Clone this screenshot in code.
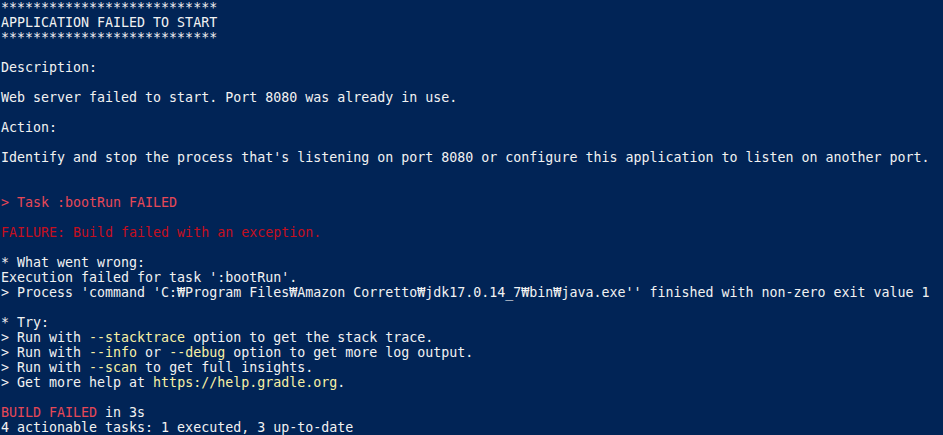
import React from "react"

const W = "text-[#f2f2f2]"
const RED = "text-[#e74856]"
const DRED = "text-[#c50f1f]"
const YEL = "text-[#f9f1a5]"

// each line is a list of [text, colour] pieces
const lines = [
    [["***************************", W]],
    [["APPLICATION FAILED TO START", W]],
    [["***************************", W]],
    [],
    [["Description:", W]],
    [],
    [["Web server failed to start. Port 8080 was already in use.", W]],
    [],
    [["Action:", W]],
    [],
    [["Identify and stop the process that's listening on port 8080 or configure this application to listen on another port.", W]],
    [],
    [],
    [["> Task :bootRun FAILED", RED]],
    [],
    [["FAILURE: Build failed with an exception.", DRED]],
    [],
    [["* What went wrong:", W]],
    [["Execution failed for task ':bootRun'.", W]],
    [["> Process 'command 'C:\u20a9Program Files\u20a9Amazon Corretto\u20a9jdk17.0.14_7\u20a9bin\u20a9java.exe'' finished with non-zero exit value 1", W]],
    [],
    [["* Try:", W]],
    [["> Run with ", W], ["--stacktrace", YEL], [" option to get the stack trace.", W]],
    [["> Run with ", W], ["--info", YEL], [" or ", W], ["--debug", YEL], [" option to get more log output.", W]],
    [["> Run with ", W], ["--scan", YEL], [" to get full insights.", W]],
    [["> Get more help at ", W], ["https://help.gradle.org", YEL], [".", W]],
    [],
    [["BUILD FAILED", RED], [" in 3s", W]],
    [["4 actionable tasks: 1 executed, 3 up-to-date", W]],
]

export default function App() {
    return (
        <div className="w-[943px] h-[435px] overflow-hidden bg-[#012456] pl-[1px] font-['DejaVu_Sans_Mono','Liberation_Mono',monospace] text-[13.3px] leading-[15px]">
            {lines.map((parts, i) => (
                <div key={i} className="h-[15px] whitespace-pre">
                    {parts.map(([text, color], j) => (
                        <span key={j} className={color}>{text}</span>
                    ))}
                </div>
            ))}
        </div>
    )
}
